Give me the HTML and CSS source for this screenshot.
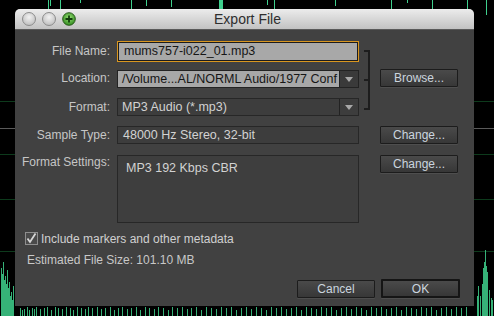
FILE: index.html
```html
<!DOCTYPE html>
<html lang="en">
<head>
    <meta charset="UTF-8">
    <title>Export File</title>
    <link rel="stylesheet" href="styles.css">
</head>
<body>
    <svg class="wave" width="494" height="316" viewBox="0 0 494 316">
        <g stroke="#0d3a1c" stroke-width="1">
            <line x1="0" y1="101.5" x2="494" y2="101.5"/>
            <line x1="0" y1="154.5" x2="494" y2="154.5"/>
            <line x1="0" y1="199.5" x2="494" y2="199.5"/>
            <line x1="0" y1="251.5" x2="494" y2="251.5"/>
        </g>
        <line x1="0" y1="128.5" x2="494" y2="128.5" stroke="#5a5a5a"/>
        <path stroke="#3fd08e" stroke-width="1" fill="none"
              d="M48.5 0V9 M50.5 0V6 M60.5 0V9 M80.5 0V3 M131.5 0V9 M146.5 0V6 M171.5 0V7
                 M267.5 0V5 M274.5 0V9 M335.5 0V6 M391.5 0V9 M407.5 0V3 M432.5 0V9 M467.5 0V9 M486.5 0V15"/>
        <rect x="219" y="0" width="4" height="9" fill="#3fd08e"/>
        <path stroke="#36b278" stroke-width="1" fill="none"
              d="M1.5 268V316 M2.5 274V316 M3.5 262V316 M4.5 280V316 M5.5 276V316 M6.5 284V316 M7.5 270V316 M8.5 288V316
                 M9.5 282V316 M10.5 296V316 M11.5 292V316 M12.5 300V316 M13.5 286V316
                 M477.5 296V316 M478.5 286V316 M480.5 296V316 M482.5 284V316 M483.5 268V316 M484.5 262V316 M485.5 250V316
                 M486.5 266V316 M487.5 272V316 M489.5 290V316 M491.5 298V316 M492.5 300V316"/>
        <path stroke="#36b278" stroke-width="1" fill="none"
              d="M20.5 308V316 M22.5 310V316 M24.5 309V316 M27.5 307V316 M29.5 310V316 M32.5 308V316 M34.5 309V316 M36.5 307V316 M40.5 309V316
                 M44.5 308V316 M47.5 307V316 M51.5 310V316 M55.5 307V316 M58.5 308V316 M62.5 309V316 M66.5 307V316
                 M70.5 308V316 M73.5 310V316 M77.5 307V316 M81.5 308V316 M85.5 309V316 M88.5 307V316 M92.5 308V316
                 M97.5 307V316 M101.5 309V316 M105.5 308V316 M110.5 307V316 M114.5 310V316 M118.5 308V316 M122.5 307V316
                 M127.5 309V316 M131.5 308V316 M136.5 307V316 M140.5 310V316 M145.5 307V316 M149.5 308V316 M154.5 309V316
                 M158.5 307V316 M163.5 308V316 M168.5 310V316 M172.5 307V316 M177.5 308V316 M182.5 307V316 M187.5 309V316
                 M191.5 308V316 M196.5 307V316 M201.5 310V316 M206.5 307V316 M211.5 308V316 M216.5 309V316 M221.5 307V316
                 M226.5 308V316 M231.5 307V316 M236.5 310V316 M241.5 308V316 M246.5 307V316 M251.5 309V316 M256.5 307V316
                 M261.5 308V316 M266.5 310V316 M271.5 307V316 M276.5 308V316 M281.5 307V316 M286.5 309V316 M291.5 308V316
                 M296.5 307V316 M301.5 310V316 M306.5 307V316 M311.5 308V316 M316.5 309V316 M321.5 307V316 M326.5 308V316
                 M331.5 307V316 M336.5 310V316 M341.5 308V316 M346.5 307V316 M351.5 309V316 M356.5 307V316 M361.5 308V316
                 M366.5 310V316 M371.5 307V316 M376.5 308V316 M381.5 307V316 M386.5 309V316 M391.5 308V316 M396.5 307V316
                 M401.5 310V316 M406.5 307V316 M411.5 308V316 M416.5 309V316 M421.5 307V316 M426.5 308V316 M431.5 307V316
                 M436.5 310V316 M441.5 308V316 M446.5 307V316 M451.5 309V316 M456.5 307V316 M461.5 308V316 M466.5 307V316"/>
    </svg>

    <div class="dialog">
        <div class="titlebar">
            <div class="lights">
                <span class="light"></span>
                <span class="light"></span>
                <svg class="zoom-btn" width="14" height="14" viewBox="0 0 14 14">
                    <defs>
                        <radialGradient id="g" cx="50%" cy="40%" r="60%">
                            <stop offset="0" stop-color="#9be27a"/>
                            <stop offset="1" stop-color="#2f8a1c"/>
                        </radialGradient>
                    </defs>
                    <circle cx="7" cy="7" r="6.3" fill="url(#g)" stroke="#2a5a1c" stroke-width="1"/>
                    <path d="M7 3.5V10.5 M3.5 7H10.5" stroke="#123c0c" stroke-width="1.8"/>
                </svg>
            </div>
            <div class="title">Export File</div>
        </div>

        <div class="body">
            <div class="form">
                <label class="lbl r1">File Name:</label>
                <div class="field light-field focused r1">mums757-i022_01.mp3</div>

                <label class="lbl r2">Location:</label>
                <div class="select light-field r2">
                    <span class="select-text">/Volume...AL/NORML Audio/1977 Conf</span>
                    <span class="arrow"></span>
                </div>
                <button class="btn r2 c4" type="button">Browse...</button>

                <label class="lbl r3">Format:</label>
                <div class="select dark-field r3">
                    <span class="select-text">MP3 Audio (*.mp3)</span>
                    <span class="arrow"></span>
                </div>

                <div class="bracket">
                    <span class="tick t1"></span>
                    <span class="tick t2"></span>
                    <span class="tick t3"></span>
                </div>

                <label class="lbl r4">Sample Type:</label>
                <div class="field dark-field r4">48000 Hz Stereo, 32-bit</div>
                <button class="btn r4 c4" type="button">Change...</button>

                <label class="lbl r5">Format Settings:</label>
                <div class="field dark-field settings r5">MP3 192 Kbps CBR</div>
                <button class="btn r5 c4" type="button">Change...</button>
            </div>

            <div class="check-row">
                <svg class="checkbox" width="13" height="13" viewBox="0 0 13 13">
                    <rect x="0.5" y="0.5" width="12" height="12" fill="#4a4a4a" stroke="#8e8e8e"/>
                    <path d="M2.5 6.5 L5 10 L10.5 1.5" stroke="#d6d6d6" stroke-width="1.8" fill="none"/>
                </svg>
                <span>Include markers and other metadata</span>
            </div>

            <div class="size">Estimated File Size: 101.10 MB</div>

            <div class="actions">
                <button class="btn cancel" type="button">Cancel</button>
                <button class="btn ok" type="button">OK</button>
            </div>
        </div>
    </div>
</body>
</html>
```

FILE: styles.css
```css
body {
    margin: 0;
    width: 494px;
    height: 316px;
    background-color: #000;
    font-family: "Liberation Sans", Arial, sans-serif;
    font-size: 12px;
    overflow: hidden;
    position: relative;
}
.wave {
    position: absolute;
    left: 0;
    top: 0;
}
.dialog {
    position: absolute;
    left: 15px;
    top: 9px;
    width: 459px;
    height: 297px;
    background: #414141;
    border-radius: 5px 5px 0 0;
    overflow: hidden;
}
.titlebar {
    height: 21px;
    background: linear-gradient(#ececec, #c2c2c2);
    border-bottom: 1px solid #5a5a5a;
    box-sizing: border-box;
    position: relative;
    display: flex;
    align-items: center;
    justify-content: center;
}
.lights {
    position: absolute;
    left: 7px;
    top: 3px;
    display: flex;
    gap: 6px;
}
.light {
    width: 12px;
    height: 12px;
    border-radius: 50%;
    border: 1px solid #8c8c8c;
    background: radial-gradient(circle at 50% 35%, #f2f2f2, #b4b4b4);
}
.title {
    font-size: 14px;
    color: #2e2e2e;
    padding-left: 6px;
}
.body {
    padding: 12px 0 0 0;
}
.form {
    display: grid;
    grid-template-columns: 95px 7px 242px 21px 78px;
    grid-template-rows: 27px 29px 28px 29px 68px;
}
.lbl {
    grid-column: 1;
    text-align: right;
    color: #c6c6c6;
    line-height: 18px;
    white-space: nowrap;
}
.r1 { grid-row: 1; }
.r2 { grid-row: 2; }
.r3 { grid-row: 3; }
.r4 { grid-row: 4; }
.r5 { grid-row: 5; }
.c4 { grid-column: 5; }
.field, .select {
    grid-column: 3;
    box-sizing: border-box;
    height: 18px;
    line-height: 16px;
    padding-left: 5px;
    white-space: nowrap;
    overflow: hidden;
    font-size: 12.5px;
}
.light-field {
    background: #a8a8a8;
    border: 1px solid #232323;
    color: #161616;
}
.focused {
    height: 19px;
    box-shadow: 0 0 0 1px #d9961f;
    border-color: #1c1c1c;
    width: 240px;
    margin-left: 1px;
}
.r1.lbl {
    line-height: 19px;
}
.dark-field {
    background: #3d3d3d;
    border: 1px solid #272727;
    color: #d2d2d2;
}
.r2.select {
    margin-top: 1px;
}
.select {
    display: flex;
    padding-left: 0;
}
.select-text {
    flex: 1;
    padding-left: 4px;
    overflow: hidden;
}
.arrow {
    width: 18px;
    background: #3a3a3a;
    border-left: 1px solid #222;
    position: relative;
}
.dark-field .arrow {
    background: transparent;
}
.arrow::after {
    content: "";
    position: absolute;
    left: 5px;
    top: 6px;
    border-left: 4px solid transparent;
    border-right: 4px solid transparent;
    border-top: 5px solid #a9a9a9;
}
.settings {
    height: 68px;
    padding-top: 4px;
    padding-left: 8px;
    background: #3e3e3e;
}
.lbl.r5 {
    line-height: 14px;
}
.bracket {
    grid-column: 4;
    grid-row: 1 / 4;
    margin-top: 8px;
    height: 60px;
    width: 11px;
    box-sizing: border-box;
    border-right: 2px solid #1d1d1d;
    position: relative;
}
.tick {
    position: absolute;
    left: 5px;
    width: 6px;
    height: 2px;
    background: #1d1d1d;
}
.t1 { top: 0; }
.t2 { top: 29px; }
.t3 { bottom: 0; }
.btn {
    box-sizing: border-box;
    height: 18px;
    width: 78px;
    padding: 0;
    border: 1px solid #1c1c1c;
    border-radius: 1px;
    background: linear-gradient(#4a4a4a, #373737);
    box-shadow: 0 1px 0 #4e4e4e;
    color: #cbd5df;
    font-family: "Liberation Sans", Arial, sans-serif;
    font-size: 12px;
}
.check-row {
    display: flex;
    align-items: center;
    gap: 3px;
    margin: 9px 0 0 10px;
    color: #d0d0d0;
    height: 13px;
}
.size {
    margin: 7px 0 0 12px;
    color: #c8c8c8;
    line-height: 16px;
}
.actions {
    display: flex;
    justify-content: flex-end;
    gap: 6px;
    margin: 11px 14px 0 0;
}
.cancel {
    margin-top: 1px;
}
.ok {
    width: 79px;
    height: 19px;
    border: 2px solid #151515;
}
```
